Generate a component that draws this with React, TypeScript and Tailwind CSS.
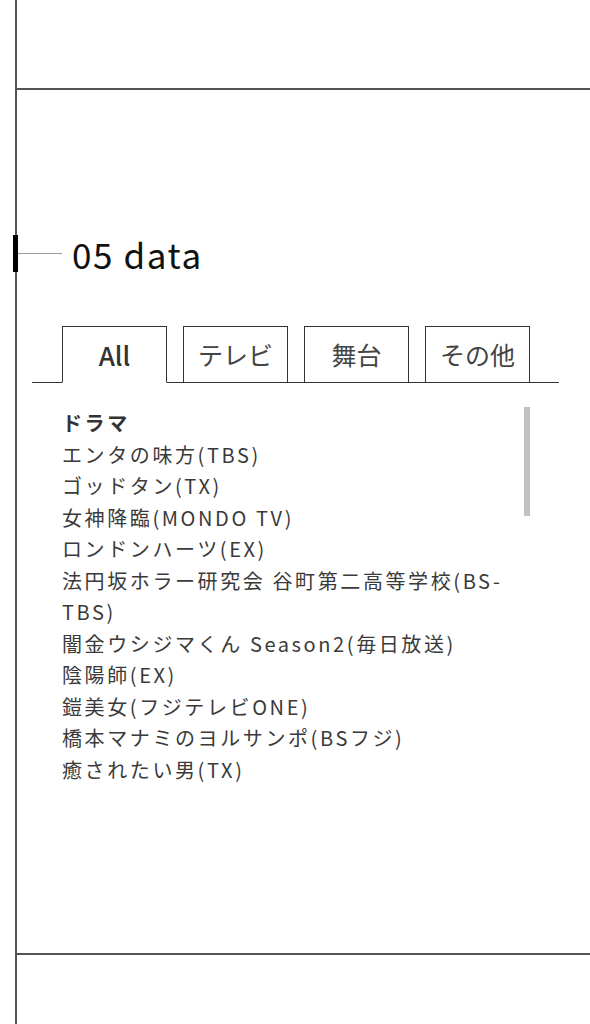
import React from 'react';

const tabs = ['All', 'テレビ', '舞台', 'その他'];

const dramas = [
  'エンタの味方(TBS)',
  'ゴッドタン(TX)',
  '女神降臨(MONDO TV)',
  'ロンドンハーツ(EX)',
  '法円坂ホラー研究会 谷町第二高等学校(BS-TBS)',
  '闇金ウシジマくん Season2(毎日放送)',
  '陰陽師(EX)',
  '鎧美女(フジテレビONE)',
  '橋本マナミのヨルサンポ(BSフジ)',
  '癒されたい男(TX)',
];

function Heading() {
  return (
    <div className="flex items-center h-[37px] ml-[-4px]">
      <div className="w-[5px] h-[37px] bg-black" />
      <div className="w-[44px] h-px bg-[#999]" />
      <h2 className="ml-[10px] text-[35px] leading-none tracking-[0.045em] text-[#111]">05 data</h2>
    </div>
  );
}

function Tabs() {
  return (
    <div className="ml-[15px] mr-[31px] flex items-end gap-[16px] pl-[30px] border-b border-[#333]">
      {tabs.map((t, i) => (
        <div
          key={t}
          className={
            i === 0
              ? 'w-[105px] h-[57px] mb-[-1px] border border-[#333] border-b-white bg-white flex items-center justify-center text-[26px] font-medium text-[#333]'
              : 'w-[105px] h-[57px] mb-[-1px] border border-[#333] bg-white flex items-center justify-center text-[25px] text-[#444]'
          }
        >
          {t}
        </div>
      ))}
    </div>
  );
}

function DataList() {
  return (
    <div className="relative ml-[45px] mt-[24px] w-[468px] h-[384px] overflow-hidden">
      <div className="pr-[12px]">
        <div className="font-bold text-[#333]">ドラマ</div>
        <ul>
          {dramas.map((it) => (
            <li key={it}>{it}</li>
          ))}
        </ul>
      </div>
      {/* scrollbar thumb */}
      <div className="absolute right-0 top-0 w-[6px] h-[109px] bg-[#c1c1c1]" />
    </div>
  );
}

export default function App() {
  return (
    <div className="min-h-[1024px] bg-white font-['Noto_Sans_CJK_JP','Noto_Sans',sans-serif]">
      <div className="ml-[15px] border-l-2 border-[#555] flex flex-col min-h-[1024px]">
        <section className="h-[88px]" />
        <section className="h-[865px] border-t-2 border-[#555] pt-[145px]">
          <Heading />
          <div className="mt-[54px]">
            <Tabs />
          </div>
          <div className="text-[20px] leading-[31.5px] tracking-[0.13em] text-[#3a3a3a]">
            <DataList />
          </div>
        </section>
        <section className="flex-1 border-t-2 border-[#555]" />
      </div>
    </div>
  );
}
